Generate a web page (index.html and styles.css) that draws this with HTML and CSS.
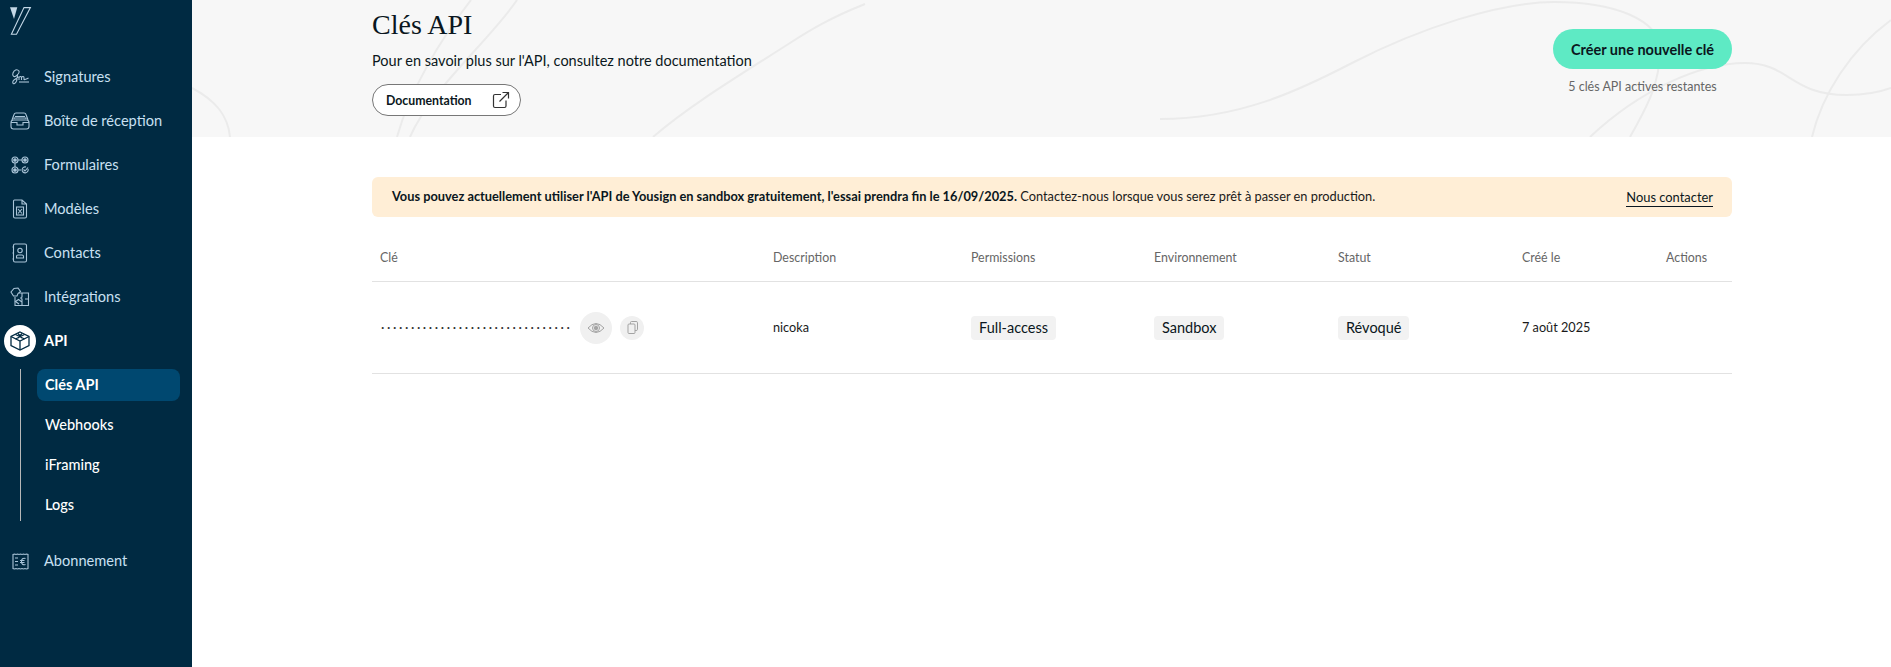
FILE: index.html
```html
<!DOCTYPE html>
<html lang="fr">
<head>
<meta charset="utf-8">
<title>Clés API</title>
<link rel="stylesheet" href="styles.css">
</head>
<body>
<div class="app">
  <aside class="sidebar">
    <svg class="logo" width="22" height="28" viewBox="0 0 22 28">
      <path class="logo-fill" d="M0 .3H7.300L4 12z"/>
      <path class="logo-line" d="M14 .6H20.400L6.500 27.200H1.400z"/>
    </svg>
    <nav class="nav">
      <a class="nav-row">
        <span class="nav-icon"><svg class="ico" width="20" height="18" viewBox="0 0 20 18"><path d="M9 3C7 .5 4 2 3 5 2 8 4 9.500 6 8 8 6.500 9.500 4.500 9 3M7.500 6C7.500 10 6.500 14.500 4.500 15.500 2.500 16.500 2 13.500 4 12 5.500 11 7 10 8.500 9"/><path d="M9 8.500V12M9 9.500C10 8 11.500 8 11.500 10V12M11.500 9.500C12.500 8 14 8 14 10V11.500C15 12 16.500 11 18.500 10"/><path d="M9 14H19"/></svg></span>
        <span class="nav-label">Signatures</span>
      </a>
      <a class="nav-row">
        <span class="nav-icon"><svg class="ico" width="20" height="18" viewBox="0 0 20 18"><path d="M2 8 4 2.500Q4.500 1 6 1H14Q15.500 1 16 2.500L18 8"/><path d="M5 4.500H15M4 7V6H16V7"/><rect x="1" y="8" width="18" height="9" rx="2.500"/><path d="M1 10.500H7V13H13V10.500H19"/></svg></span>
        <span class="nav-label">Boîte de réception</span>
      </a>
      <a class="nav-row">
        <span class="nav-icon"><svg class="ico" width="18" height="18" viewBox="0 0 18 18"><circle cx="4" cy="4" r="3"/><circle cx="14" cy="4" r="3"/><circle cx="4" cy="14" r="3"/><circle class="dot" cx="4" cy="4" r="1.300"/><circle class="dot" cx="14" cy="4" r="1.300"/><circle class="dot" cx="4" cy="14" r="1.300"/><path d="M7 4H11M4 7V11M7 14H10M17 13A3 3 0 1 1 15 11M12.500 13.500 14 15 17 11.500"/></svg></span>
        <span class="nav-label">Formulaires</span>
      </a>
      <a class="nav-row">
        <span class="nav-icon"><svg class="ico" width="16" height="20" viewBox="0 0 16 20"><path d="M2.500 1H10L14.500 5V17.500Q14.500 19 13 19H3Q1.500 19 1.500 17.500V2Q1.500 1 2.500 1zM10 1V5H14.500"/><rect x="4.500" y="8" width="7" height="8"/><path d="M6 10 10 14.500M10 10 6 14.500"/></svg></span>
        <span class="nav-label">Modèles</span>
      </a>
      <a class="nav-row">
        <span class="nav-icon"><svg class="ico" width="16" height="20" viewBox="0 0 16 20"><rect x="1.500" y="1" width="13" height="18" rx="1.500"/><path d="M1.500 4H.5M1.500 10H.5M1.500 16H.5"/><circle cx="8" cy="7.500" r="2.200"/><path d="M4.500 15V13.500Q4.500 12 6 12H10Q11.500 12 11.500 13.500V15z"/></svg></span>
        <span class="nav-label">Contacts</span>
      </a>
      <a class="nav-row">
        <span class="nav-icon"><svg class="ico" width="20" height="20" viewBox="0 0 20 20"><path d="M3.500 9 1 5 4 1.500 8 1 10.500 4.500 8 6.500 7 9z"/><path d="M9 6H18.500V18.500H5V10"/><path d="M12 6V10C10.500 10 10.500 12 12 12V14.500M18.500 12H15M12 18.500V15L8.500 12.500 5.500 14.500 9 17"/></svg></span>
        <span class="nav-label">Intégrations</span>
      </a>
      <a class="nav-row nav-row-current">
        <span class="nav-icon nav-icon-current"><svg class="ico-dark" width="22" height="22" viewBox="0 0 22 22"><path d="M11 2 20 6.500V15.500L11 20 2 15.500V6.500z"/><path d="M2 6.500 11 11 20 6.500M11 11V20"/><path d="M6.500 4.500 15.500 9M15.500 4.500 6.500 9M9 3.500 13 8M13 3.500 9 8"/></svg></span>
        <span class="nav-label">API</span>
      </a>
      <div class="subnav">
        <a class="sub-row sub-row-active">Clés API</a>
        <a class="sub-row">Webhooks</a>
        <a class="sub-row">iFraming</a>
        <a class="sub-row">Logs</a>
      </div>
      <a class="nav-row">
        <span class="nav-icon"><svg class="ico" width="17" height="17" viewBox="0 0 17 17"><path d="M1 1.500 2.500 1 4 1.500 5.500 1 7 1.500 8.500 1 10 1.500 11.500 1 13 1.500 14.500 1 16 1.500V15.500L14.500 16 13 15.500 11.500 16 10 15.500 8.500 16 7 15.500 5.500 16 4 15.500 2.500 16 1 15.500z"/><path d="M3 5H6M3 8.500H6M3 12H6M13.500 5.500Q9.500 4.500 9.500 8.500T13.500 11.500M8 7.500H12.500M8 9.500H12.500"/></svg></span>
        <span class="nav-label">Abonnement</span>
      </a>
    </nav>
  </aside>

  <main class="main">
    <header class="hero">
      <svg class="hero-art" width="1699" height="137" viewBox="192 0 1699 137">
        <path d="M1160 119C1240 119 1300 90 1352 63 1420 28 1500 2 1554 2 1615 2 1660 20 1660 50 1660 85 1645 110 1630 137"/>
        <path d="M1590 137C1640 90 1700 63 1745 63 1790 63 1790 95 1847 95 1865 95 1880 92 1891 88"/>
        <path d="M1812 137C1822 95 1850 50 1891 20"/>
        <path d="M471 0C440 40 410 90 397 137"/>
        <path d="M517 0C490 40 430 90 410 137"/>
        <path d="M865 4C830 18 810 30 790 43 740 75 690 105 653 137"/>
        <path d="M192 88C215 100 228 115 230 137"/>
      </svg>
      <div class="hero-left">
        <h1 class="title">Clés API</h1>
        <p class="lead">Pour en savoir plus sur l'API, consultez notre documentation</p>
        <a class="doc-btn">
          <span>Documentation</span>
          <svg class="doc-ico" width="18" height="18" viewBox="0 0 18 18"><path d="M9 3.500H3Q1.500 3.500 1.500 5V15Q1.500 16.500 3 16.500H12.500Q14 16.500 14 15V9.500"/><path d="M7.500 10.500 16.500 1.500M10.500 1.500H16.500V7.500"/></svg>
        </a>
      </div>
      <div class="hero-right">
        <a class="primary-btn">Créer une nouvelle clé</a>
        <p class="remaining">5 clés API actives restantes</p>
      </div>
    </header>

    <section class="content">
      <div class="notice">
        <p class="notice-text"><strong>Vous pouvez actuellement utiliser l'API de Yousign en sandbox gratuitement, l'essai prendra fin le 16/09/2025.</strong> Contactez-nous lorsque vous serez prêt à passer en production.</p>
        <a class="notice-link">Nous contacter</a>
      </div>

      <div class="table">
        <div class="tr th-row">
          <div>Clé</div><div>Description</div><div>Permissions</div><div>Environnement</div><div>Statut</div><div>Créé le</div><div>Actions</div>
        </div>
        <div class="tr td-row">
          <div class="key-cell">
            <span class="key-dots">································</span>
            <span class="round round-lg"><svg class="ico-grey" width="18" height="12" viewBox="0 0 18 12"><path d="M1 6Q9-3 17 6 9 15 1 6z"/><circle cx="9" cy="6" r="3.500"/><circle class="grey-dot" cx="9" cy="6" r="1.800"/></svg></span>
            <span class="round round-sm"><svg class="ico-grey" width="11" height="13" viewBox="0 0 11 13"><rect x="1" y="3" width="7" height="9.500" rx="1"/><path d="M3.500 3V1.500Q3.500 .5 4.500 .5H9Q10.500 .5 10.500 1.500V8.500Q10.500 9.500 9 9.500H8"/></svg></span>
          </div>
          <div class="td-text">nicoka</div>
          <div><span class="tag">Full-access</span></div>
          <div><span class="tag">Sandbox</span></div>
          <div><span class="tag">Révoqué</span></div>
          <div class="td-text">7 août 2025</div>
          <div></div>
        </div>
      </div>
    </section>
  </main>
</div>
</body>
</html>
```

FILE: styles.css
```css
* { box-sizing: border-box; }
html, body { margin: 0; height: 100%; }
body {
  font-family: "Lato", "Noto Sans", sans-serif;
  color: #0b1720;
  background: #fff;
  overflow: hidden;
}
a { color: inherit; text-decoration: none; }
p, h1 { margin: 0; }

.app { display: flex; height: 667px; }

/* Sidebar */
.sidebar {
  flex: 0 0 192px;
  background: #002a42;
  padding-top: 7px;
}
.logo { display: block; margin-left: 10px; margin-bottom: 20px; }
.logo-fill { fill: #c3d7e6; }
.logo-line { fill: none; stroke: #c3d7e6; stroke-width: 1.100; }
.nav { display: flex; flex-direction: column; }
.nav-row {
  display: flex;
  align-items: center;
  gap: 8px;
  height: 44px;
  padding-left: 4px;
  font-size: 14.600px;
  color: #c9e0f2;
}
.nav-label { padding-bottom: 2px; }
.nav-icon {
  flex: 0 0 32px;
  height: 32px;
  display: flex;
  align-items: center;
  justify-content: center;
}
.ico { fill: none; stroke: #a9c4d8; stroke-width: 1.100; }
.ico .dot { fill: #a9c4d8; }
.nav-row-current { color: #fff; font-weight: 700; }
.nav-icon-current { background: #fff; border-radius: 50%; }
.ico-dark { fill: none; stroke: #002a42; stroke-width: 1.300; }
.subnav {
  display: flex;
  flex-direction: column;
  gap: 8px;
  margin: 6px 0 18px 20px;
  padding-left: 16px;
  width: 160px;
  border-left: 1px solid #b8b8b8;
}
.sub-row {
  display: flex;
  align-items: center;
  height: 32px;
  padding: 0 0 2px 8px;
  border-radius: 8px;
  color: #fff;
  font-size: 14.500px;
  font-weight: 500;
}
.sub-row-active { background: #004870; font-weight: 700; }

/* Main */
.main { flex: 1; min-width: 0; }
.hero {
  position: relative;
  display: flex;
  justify-content: space-between;
  height: 137px;
  padding: 0 159px 0 180px;
  background: #f7f7f7;
  overflow: hidden;
}
.hero-art {
  position: absolute;
  left: 0;
  top: 0;
  fill: none;
  stroke: #ebebeb;
  stroke-width: 2;
}
.hero-left, .hero-right { position: relative; }
.title {
  font-family: "Liberation Serif", serif;
  font-weight: 400;
  font-size: 28px;
  line-height: 36px;
  margin-top: 7px;
  color: #0a1620;
}
.lead { font-size: 14.500px; line-height: 20px; margin-top: 8px; }
.doc-btn {
  display: inline-flex;
  align-items: center;
  justify-content: space-between;
  width: 149px;
  height: 32px;
  margin-top: 13px;
  padding: 0 10px 0 13px;
  background: #fff;
  border: 1px solid #777;
  border-radius: 16px;
  font-size: 12.300px;
  font-weight: 700;
}
.doc-ico { fill: none; stroke: #333; stroke-width: 1.200; }
.hero-right {
  display: flex;
  flex-direction: column;
  align-items: center;
  padding-top: 29px;
  width: 179px;
}
.primary-btn {
  display: flex;
  align-items: center;
  justify-content: center;
  width: 100%;
  height: 40px;
  border-radius: 20px;
  background: #5eeac4;
  font-size: 14.500px;
  font-weight: 700;
}
.remaining { margin-top: 10px; font-size: 12.500px; line-height: 16px; color: #666; white-space: nowrap; }

.content { padding: 40px 159px 0 180px; }
.notice {
  display: flex;
  align-items: center;
  justify-content: space-between;
  height: 40px;
  padding: 0 19px 0 20px;
  background: #ffeed6;
  border-radius: 6px;
  font-size: 12.800px;
}
.notice-text { color: #1a1a1a; white-space: nowrap; padding-bottom: 2px; }
.notice-text strong { color: #0a1620; font-weight: 700; }
.notice-link {
  font-size: 12.900px;
  line-height: 17px;
  padding-top: 1px;
  border-bottom: 1px solid #0a1620;
}

.table { margin-top: 16px; }
.tr {
  display: grid;
  grid-template-columns: 393px 198px 183px 184px 184px 144px 74px;
  align-items: center;
  border-bottom: 1px solid #e2e2e2;
}
.tr > div { padding-left: 8px; }
.th-row { height: 49px; font-size: 12.400px; color: #666; }
.td-row { height: 92px; font-size: 12.700px; color: #1a1a1a; }
.td-text { padding-bottom: 2px; }
.key-cell { display: flex; align-items: center; }
.key-dots { flex: 0 0 200px; font-size: 13px; letter-spacing: 2.600px; white-space: nowrap; color: #333; padding: 0 0 2px 1px; }
.round {
  display: flex;
  align-items: center;
  justify-content: center;
  border-radius: 50%;
  background: #f0f0f0;
}
.round-lg { width: 32px; height: 32px; }
.round-sm { width: 24px; height: 24px; margin-left: 8px; }
.ico-grey { fill: none; stroke: #a3a3a3; stroke-width: 1; }
.grey-dot { fill: #a3a3a3; }
.tag {
  display: inline-flex;
  align-items: center;
  height: 24px;
  padding: 0 8px;
  background: #f2f2f2;
  border-radius: 4px;
  font-size: 14.500px;
  color: #0a1620;
}
```
